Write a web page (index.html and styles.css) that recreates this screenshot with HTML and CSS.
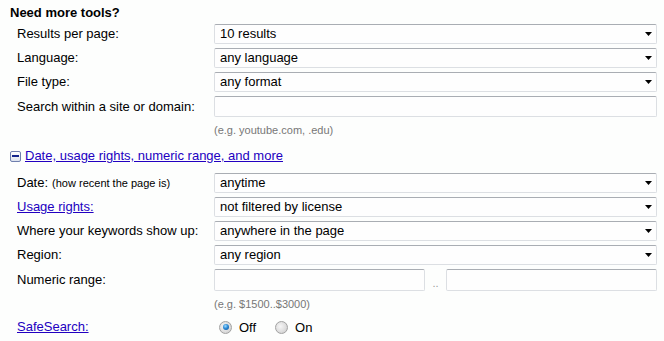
FILE: index.html
```html
<!DOCTYPE html>
<html>
<head>
<meta charset="utf-8">
<link rel="stylesheet" href="styles.css">
</head>
<body>
<div class="tools">
  <h2 class="title">Need more tools?</h2>
  <div class="grid">
    <div class="label">Results per page:</div>
    <div class="select"><span>10 results</span><svg class="arrow" width="7" height="4" viewBox="0 0 7 4"><path d="M0 0H7L3.5 4Z" fill="#000"/></svg></div>
    <div class="label">Language:</div>
    <div class="select"><span>any language</span><svg class="arrow" width="7" height="4" viewBox="0 0 7 4"><path d="M0 0H7L3.5 4Z" fill="#000"/></svg></div>
    <div class="label">File type:</div>
    <div class="select"><span>any format</span><svg class="arrow" width="7" height="4" viewBox="0 0 7 4"><path d="M0 0H7L3.5 4Z" fill="#000"/></svg></div>
    <div class="label">Search within a site or domain:</div>
    <div class="input"></div>
    <div></div>
    <div class="hint">(e.g. youtube.com, .edu)</div>
  </div>

  <div class="more">
    <span class="minus"><span class="bar"></span></span>
    <a href="#" class="link">Date, usage rights, numeric range, and more</a>
  </div>

  <div class="grid">
    <div class="label">Date: <small class="small">(how recent the page is)</small></div>
    <div class="select"><span>anytime</span><svg class="arrow" width="7" height="4" viewBox="0 0 7 4"><path d="M0 0H7L3.5 4Z" fill="#000"/></svg></div>
    <div class="label"><a href="#" class="link">Usage rights:</a></div>
    <div class="select"><span>not filtered by license</span><svg class="arrow" width="7" height="4" viewBox="0 0 7 4"><path d="M0 0H7L3.5 4Z" fill="#000"/></svg></div>
    <div class="label">Where your keywords show up:</div>
    <div class="select"><span>anywhere in the page</span><svg class="arrow" width="7" height="4" viewBox="0 0 7 4"><path d="M0 0H7L3.5 4Z" fill="#000"/></svg></div>
    <div class="label">Region:</div>
    <div class="select"><span>any region</span><svg class="arrow" width="7" height="4" viewBox="0 0 7 4"><path d="M0 0H7L3.5 4Z" fill="#000"/></svg></div>
    <div class="label">Numeric range:</div>
    <div class="range">
      <div class="input"></div>
      <span class="dots">..</span>
      <div class="input"></div>
    </div>
    <div></div>
    <div class="hint">(e.g. $1500..$3000)</div>
    <div class="label"><a href="#" class="link">SafeSearch:</a></div>
    <div class="radios">
      <label class="opt"><span class="radio checked"><span class="dot"></span></span>Off</label>
      <label class="opt"><span class="radio"></span>On</label>
    </div>
  </div>
</div>
</body>
</html>
```

FILE: styles.css
```css
html, body {
  margin: 0;
  padding: 0;
  background: #fdfefd;
}

body {
  font-family: "Liberation Sans", Arial, sans-serif;
  font-size: 13px;
  color: #000;
}

.tools {
  padding: 5px 0 0 10px;
}

.title {
  margin: 0 0 3px 0;
  font-size: 13px;
  line-height: 16px;
  font-weight: bold;
}

.grid {
  display: grid;
  grid-template-columns: 197px 443px;
  row-gap: 4px;
  padding-left: 7px;
}

.label {
  display: flex;
  align-items: center;
  white-space: nowrap;
  line-height: 16px;
}

.small {
  font-size: 11px;
  margin-left: 4px;
}

.link {
  color: #2200c1;
  text-decoration: underline;
}

.select {
  box-sizing: border-box;
  height: 20px;
  display: flex;
  align-items: center;
  justify-content: space-between;
  padding: 0 4px 0 5px;
  background: #fefefe;
  border: 1px solid #dcdfe3;
  border-top-color: #a9adb3;
  border-radius: 2px;
  line-height: 16px;
}

.arrow {
  display: block;
}

.input {
  box-sizing: border-box;
  height: 21px;
  background: #fefefe;
  border: 1px solid #dcdfe3;
  border-top-color: #a9adb3;
  border-radius: 2px;
}

.hint {
  font-size: 11px;
  line-height: 18px;
  color: #777;
}

.more {
  display: flex;
  align-items: center;
  gap: 4px;
  margin-top: 9px;
  margin-bottom: 9px;
  line-height: 16px;
}

.minus {
  box-sizing: border-box;
  width: 11px;
  height: 11px;
  border: 1px solid #6f7fae;
  border-radius: 2px;
  background: linear-gradient(#ffffff, #dde3ee);
  display: flex;
  align-items: center;
  justify-content: center;
}

.bar {
  width: 7px;
  height: 2px;
  background: #13248c;
}

.range {
  display: flex;
  align-items: center;
}

.range .input {
  width: 211px;
  height: 22px;
}

.dots {
  width: 21px;
  text-align: center;
  color: #999;
  font-size: 11px;
  align-self: flex-end;
  line-height: 16px;
}

.radios {
  display: flex;
  align-items: center;
  height: 20px;
  padding-left: 5px;
}

.opt {
  display: flex;
  align-items: center;
  gap: 7px;
  margin-right: 19px;
}

.radio {
  box-sizing: border-box;
  width: 13px;
  height: 13px;
  border-radius: 50%;
  border: 1px solid #a2a2a2;
  background: radial-gradient(circle at 40% 40%, #f6f6f6 0%, #dcdcdc 60%, #c6c6c6 100%);
  display: flex;
  align-items: center;
  justify-content: center;
}

.dot {
  width: 6px;
  height: 6px;
  border-radius: 50%;
  background: radial-gradient(circle at 40% 35%, #9fdcff 0%, #2b8ad6 45%, #0b4c91 100%);
}
```
